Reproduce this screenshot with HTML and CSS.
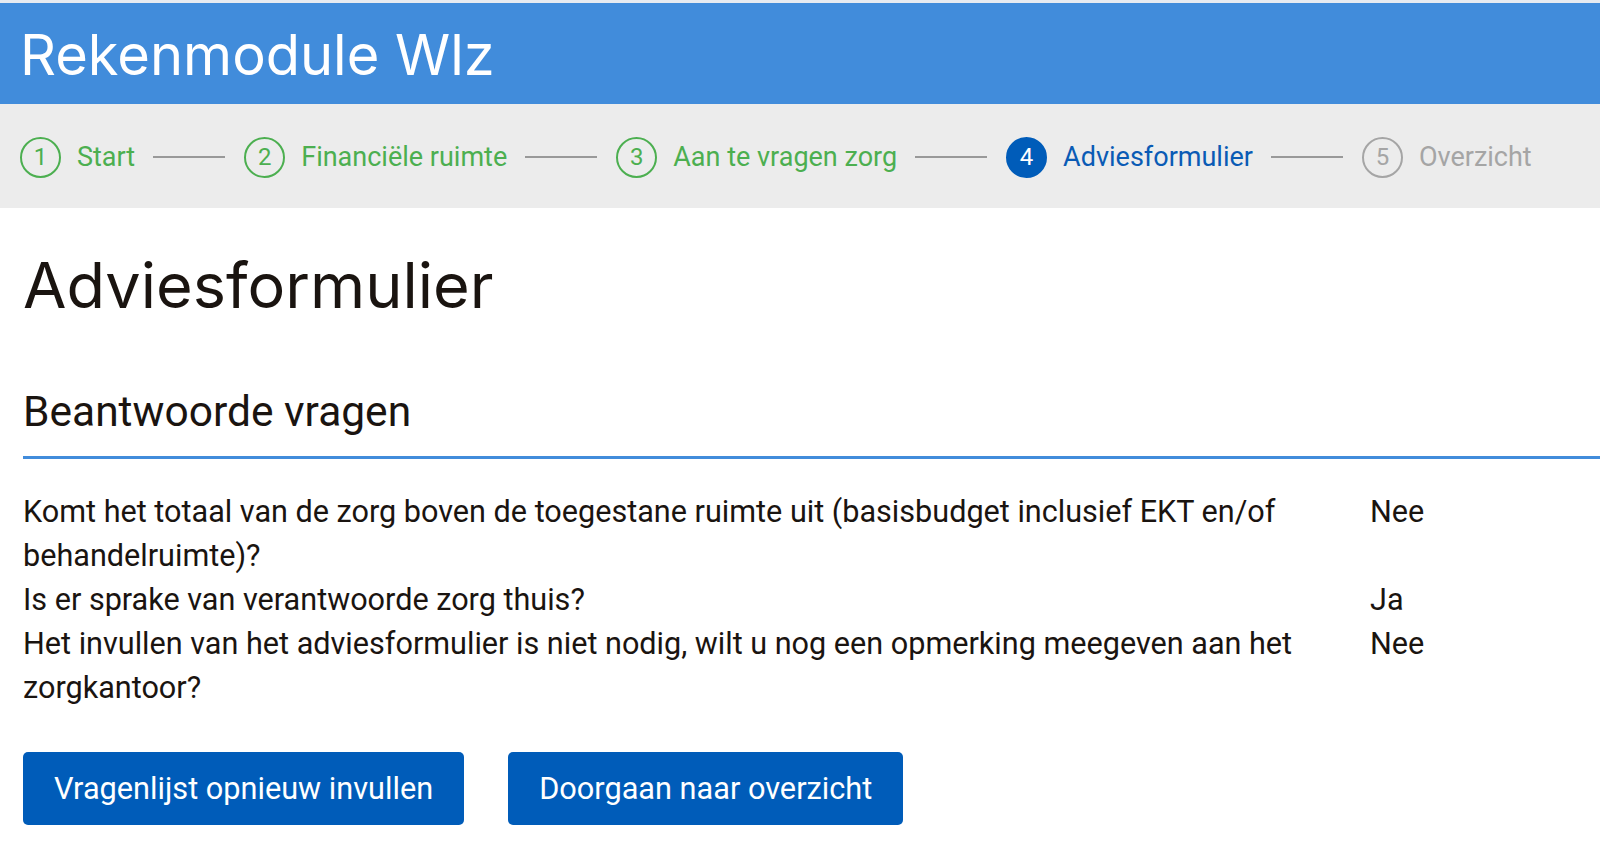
FILE: index.html
```html
<!DOCTYPE html>
<html lang="nl">
<head>
<meta charset="utf-8">
<title>Rekenmodule Wlz</title>
<link rel="stylesheet" href="styles.css">
</head>
<body>
<header class="topbar">
  <div class="brand">Rekenmodule Wlz</div>
</header>
<nav class="stepper">
  <div class="step done"><span class="num">1</span><span class="label">Start</span></div>
  <span class="sep"></span>
  <div class="step done"><span class="num">2</span><span class="label">Financiële ruimte</span></div>
  <span class="sep"></span>
  <div class="step done"><span class="num">3</span><span class="label">Aan te vragen zorg</span></div>
  <span class="sep"></span>
  <div class="step active"><span class="num">4</span><span class="label">Adviesformulier</span></div>
  <span class="sep"></span>
  <div class="step todo"><span class="num">5</span><span class="label">Overzicht</span></div>
</nav>
<main class="content">
  <h1 class="title">Adviesformulier</h1>
  <h2 class="subtitle">Beantwoorde vragen</h2>
  <div class="answers">
    <div class="q">Komt het totaal van de zorg boven de toegestane ruimte uit (basisbudget inclusief EKT en/of behandelruimte)?</div>
    <div class="a">Nee</div>
    <div class="q">Is er sprake van verantwoorde zorg thuis?</div>
    <div class="a">Ja</div>
    <div class="q">Het invullen van het adviesformulier is niet nodig, wilt u nog een opmerking meegeven aan het zorgkantoor?</div>
    <div class="a">Nee</div>
  </div>
  <div class="actions">
    <button class="btn">Vragenlijst opnieuw invullen</button>
    <button class="btn">Doorgaan naar overzicht</button>
  </div>
</main>
</body>
</html>
```
FILE: styles.css
```css
html, body {
  margin: 0;
  padding: 0;
  background: #ffffff;
}
body {
  font-family: Roboto, "Liberation Sans", sans-serif;
  color: #1a1410;
  border-top: 3px solid #e6ebf1;
}
.topbar {
  background: #418cdb;
  height: 101px;
  display: flex;
  align-items: center;
  padding-left: 20px;
}
.brand {
  font-family: Inter, "Open Sans", sans-serif;
  color: #ffffff;
  font-size: 56px;
  font-weight: 400;
  padding-top: 2px;
}
.stepper {
  background: #ececec;
  height: 104px;
  display: flex;
  align-items: center;
  padding-left: 20px;
  padding-top: 2px;
  box-sizing: border-box;
}
.step {
  display: flex;
  align-items: center;
  gap: 16px;
}
.num {
  box-sizing: border-box;
  width: 41px;
  height: 41px;
  border-radius: 50%;
  border: 2px solid currentColor;
  display: flex;
  align-items: center;
  justify-content: center;
  font-size: 24px;
}
.label {
  font-size: 27px;
}
.done { color: #4caf50; }
.active { color: #0a5bb5; }
.active .num {
  background: #005cb9;
  border-color: #005cb9;
  color: #ffffff;
}
.todo { color: #a5a5a5; }
.sep {
  width: 72px;
  height: 2px;
  background: #999999;
  margin: 0 19px 0 18px;
}
.content {
  padding-left: 23px;
}
.title {
  font-family: Inter, "Open Sans", sans-serif;
  font-weight: 400;
  font-size: 63px;
  margin: 39px 0 0;
  line-height: 76px;
}
.subtitle {
  font-weight: 400;
  font-size: 42.5px;
  margin: 64px 0 0;
  line-height: 50px;
  padding-bottom: 19px;
  border-bottom: 3px solid #418cdb;
}
.answers {
  display: grid;
  grid-template-columns: 1347px auto;
  font-size: 30.6px;
  line-height: 44px;
  margin-top: 31px;
}
.q {
  padding-right: 30px;
}
.actions {
  display: flex;
  gap: 44px;
  margin-top: 42px;
}
.btn {
  font-family: Roboto, "Liberation Sans", sans-serif;
  background: #005cb9;
  color: #ffffff;
  border: none;
  border-radius: 5px;
  height: 73px;
  padding: 0 31px;
  font-size: 30.7px;
}
```
